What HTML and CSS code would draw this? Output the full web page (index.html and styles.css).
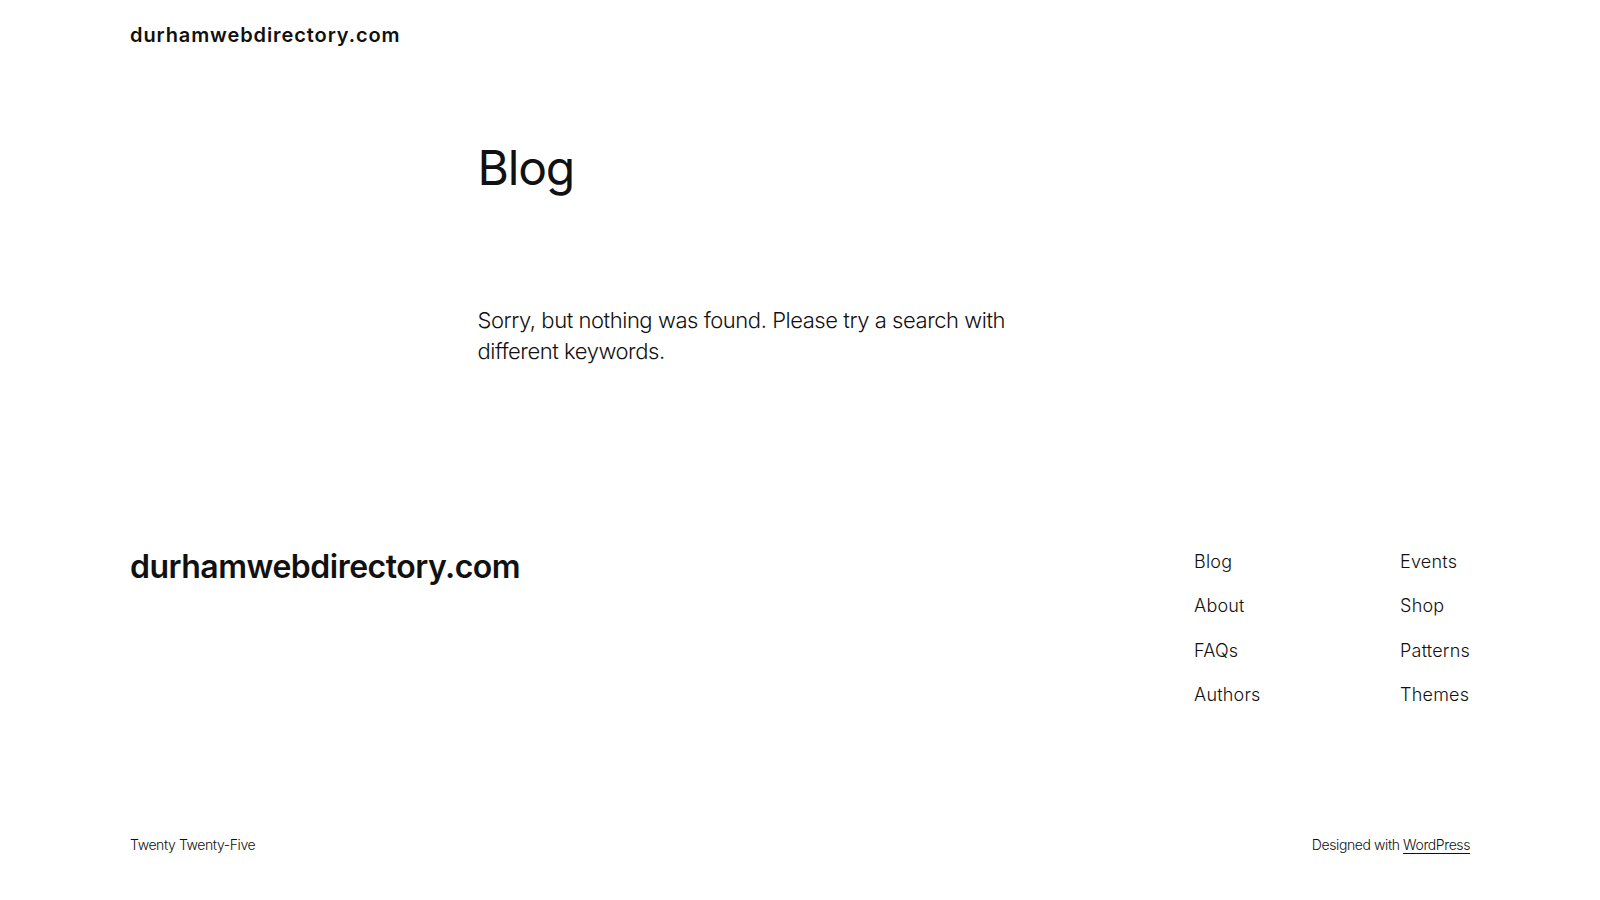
FILE: index.html
```html
<!DOCTYPE html>
<html lang="en">
<head>
<meta charset="utf-8">
<title>Blog – durhamwebdirectory.com</title>
<link rel="stylesheet" href="styles.css">
</head>
<body>
<header class="site-header">
  <a class="site-title" href="#">durhamwebdirectory.com</a>
</header>
<main class="main">
  <h1 class="page-title">Blog</h1>
  <p class="no-results">Sorry, but nothing was found. Please try a search with different keywords.</p>
</main>
<footer class="site-footer">
  <div class="footer-top">
    <a class="footer-title" href="#">durhamwebdirectory.com</a>
    <nav class="footer-nav">
      <ul class="nav-col">
        <li><a href="#">Blog</a></li>
        <li><a href="#">About</a></li>
        <li><a href="#">FAQs</a></li>
        <li><a href="#">Authors</a></li>
      </ul>
      <ul class="nav-col">
        <li><a href="#">Events</a></li>
        <li><a href="#">Shop</a></li>
        <li><a href="#">Patterns</a></li>
        <li><a href="#">Themes</a></li>
      </ul>
    </nav>
  </div>
  <div class="footer-bottom">
    <span>Twenty Twenty-Five</span>
    <span>Designed with <a class="wp-link" href="#">WordPress</a></span>
  </div>
</footer>
</body>
</html>
```
FILE: styles.css
```css
* { box-sizing: border-box; }
html, body { margin: 0; padding: 0; }
body {
  background: #fff;
  color: #111;
  font-family: Inter, "Noto Sans", sans-serif;
  font-weight: 300;
  width: 1600px;
  height: 900px;
  overflow: hidden;
}
a { color: inherit; text-decoration: none; }

.site-header {
  height: 70px;
  padding: 0 130px;
  display: flex;
  align-items: center;
}
.site-title {
  font-size: 20px;
  font-weight: 600;
  letter-spacing: 0.9px;
}

.main {
  width: 645px;
  margin: 0 auto;
  padding-top: 71px;
  height: 470px;
}
.page-title {
  margin: 0;
  font-size: 48px;
  line-height: 54px;
  font-weight: 400;
  letter-spacing: -1.2px;
}
.no-results {
  margin: 110px 0 0;
  max-width: 600px;
  font-size: 22px;
  line-height: 31px;
  letter-spacing: -0.45px;
}

.site-footer {
  padding: 0 130px;
}
.footer-top {
  display: flex;
  justify-content: space-between;
  align-items: flex-start;
  height: 295px;
}
.footer-title {
  font-size: 32px;
  line-height: 40px;
  font-weight: 600;
  letter-spacing: -0.5px;
  margin-top: 7px;
}
.footer-nav {
  display: flex;
  margin-top: 8px;
}
.nav-col {
  list-style: none;
  margin: 0;
  padding: 0;
  display: flex;
  flex-direction: column;
  gap: 16.4px;
}
.nav-col:first-child { width: 206px; }
.nav-col li {
  font-size: 18px;
  line-height: 28px;
  letter-spacing: 0.2px;
}
.footer-bottom {
  display: flex;
  justify-content: space-between;
  font-size: 14px;
  line-height: 20px;
  letter-spacing: -0.4px;
}
.wp-link { text-decoration: underline; text-underline-offset: 3px; }
```
